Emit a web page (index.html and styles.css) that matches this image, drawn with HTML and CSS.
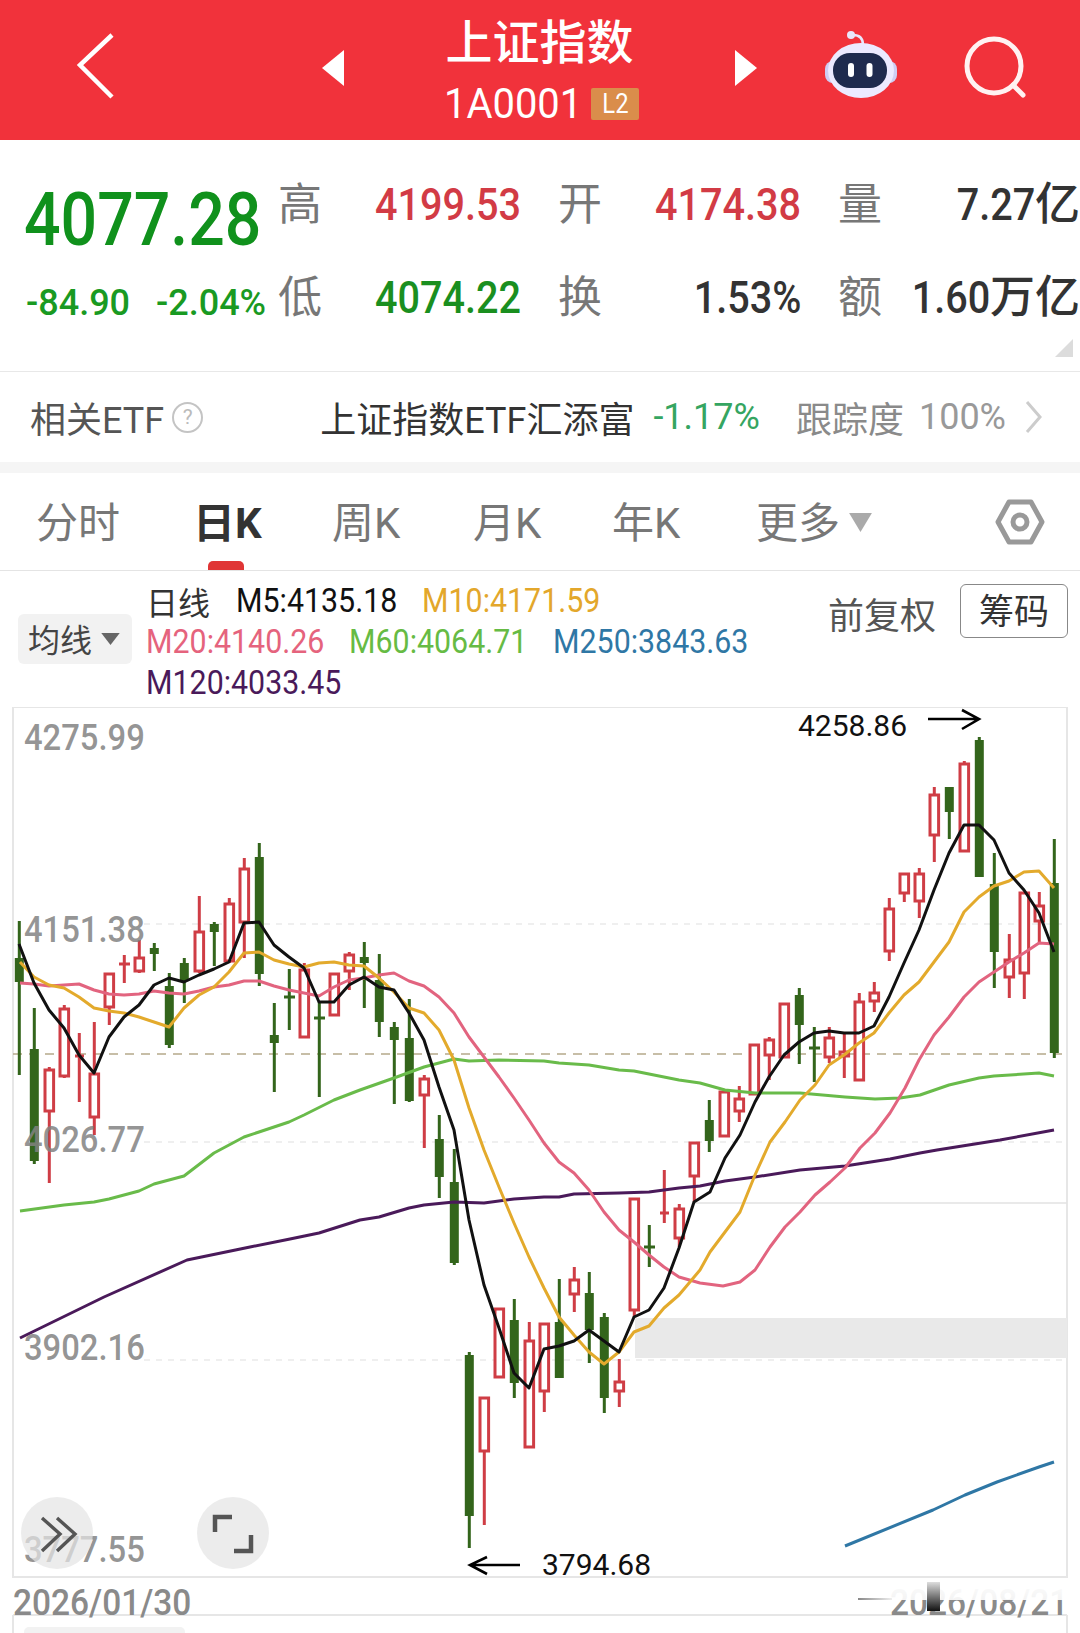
FILE: index.html
```html
<!DOCTYPE html>
<html lang="zh-CN">
<head>
<meta charset="utf-8">
<title>上证指数</title>
<link rel="stylesheet" href="styles.css">
</head>
<body>
<div class="page">
  <header class="hdr">
    <svg class="back" viewBox="0 0 44 70"><path d="M38 3 6 33 38 65" transform="translate(0 -1)"/></svg>
    <svg class="tri tri-l" viewBox="0 0 22 36"><path d="M22 0V36L0 18Z"/></svg>
    <div class="title-block">
      <div class="title">上证指数</div>
      <div class="sub"><span class="code"><span class="sq-l sq95">1A0001</span></span><span class="badge"><span class="sq-c sq85">L2</span></span></div>
    </div>
    <svg class="tri tri-r" viewBox="0 0 22 36"><path d="M0 0V36L22 18Z"/></svg>
    <svg class="robot" viewBox="0 0 82 70">
      <path class="ant" d="M33 4C38 4 43 6 43 14"/>
      <circle class="ant-dot" cx="31" cy="4" r="4"/>
      <rect class="ear" x="5" y="30" width="72" height="22" rx="8"/>
      <ellipse class="helm" cx="41" cy="39.500" rx="33" ry="27.500"/>
      <rect class="face" x="13" y="22" width="54" height="35" rx="17"/>
      <rect class="eye" x="28" y="32" width="6" height="14" rx="3"/>
      <rect class="eye" x="46.500" y="32" width="6" height="14" rx="3"/>
    </svg>
    <svg class="search" viewBox="0 0 70 70"><circle cx="34" cy="33" r="27"/><path d="M53 52 63 62"/></svg>
  </header>

  <section class="quote">
    <div class="price-cell"><span class="price sq-l sq87">4077.28</span></div>
    <div class="stat"><span class="lbl">高</span><span class="val red sq-r sq88">4199.53</span></div>
    <div class="stat"><span class="lbl">开</span><span class="val red sq-r sq88">4174.38</span></div>
    <div class="stat"><span class="lbl">量</span><span class="val dark"><span class="sq-r sq88">7.27</span>亿</span></div>
    <div class="chg-cell"><span class="chg chg-a">-84.90</span><span class="chg">-2.04%</span></div>
    <div class="stat"><span class="lbl">低</span><span class="val green sq-r sq88">4074.22</span></div>
    <div class="stat"><span class="lbl">换</span><span class="val dark sq-r sq88">1.53%</span></div>
    <div class="stat"><span class="lbl">额</span><span class="val dark"><span class="sq-r sq88">1.60</span>万亿</span></div>
    <span class="corner"></span>
  </section>

  <section class="etf">
    <span class="etf-lbl">相关ETF</span>
    <span class="help">?</span>
    <span class="etf-name">上证指数ETF汇添富</span>
    <span class="etf-pct">-1.17%</span>
    <span class="etf-track">跟踪度</span>
    <span class="etf-num">100%</span>
    <svg class="etf-arrow" viewBox="0 0 18 34"><path d="M2 2 15 17 2 32"/></svg>
  </section>

  <div class="band"></div>

  <nav class="tabs">
    <span class="tab">分时</span>
    <span class="tab tab-on">日K</span>
    <span class="tab">周K</span>
    <span class="tab">月K</span>
    <span class="tab">年K</span>
    <span class="tab">更多</span>
    <svg class="more-tri" viewBox="0 0 24 20"><path d="M0 0H24L12 20Z"/></svg>
    <svg class="hex" viewBox="0 0 50 46"><path d="M14 3H36L47 23 36 43H14L3 23Z"/><circle cx="25" cy="23" r="7"/></svg>
  </nav>

  <section class="ind">
    <div class="pill"><span class="pill-text">均线</span><svg class="pill-tri" viewBox="0 0 20 13"><path d="M0 0H20L10 13Z"/></svg></div>
    <div class="ma-col">
      <div class="ma-row"><span class="ma-head">日线</span><span class="ma w186 c-black"><span class="sq-l sq92">M5:4135.18</span></span><span class="ma c-orange"><span class="sq-l sq92">M10:4171.59</span></span></div>
      <div class="ma-row"><span class="ma w203 c-pink"><span class="sq-l sq92">M20:4140.26</span></span><span class="ma w204 c-green"><span class="sq-l sq92">M60:4064.71</span></span><span class="ma c-blue"><span class="sq-l sq92">M250:3843.63</span></span></div>
      <div class="ma-row"><span class="ma c-purple"><span class="sq-l sq92">M120:4033.45</span></span></div>
    </div>
    <div class="ind-right">
      <span class="fq">前复权</span>
      <span class="chip">筹码</span>
    </div>
  </section>

  <section class="chart">
    <svg class="plot" viewBox="0 707 1080 926">
      <g class="frame">
        <path d="M13 707H1067V1577H13ZM13 1615H1067M13 1615V1633M1067 1615V1633"/>
      </g>
      <path class="grid-d" d="M144 924H1067M144 1142H1067M144 1360H1067"/>
      <path class="grid-s" d="M695 1203H1067"/>
      <path class="grid-p" d="M13 1054H1067"/>
      <rect class="zone" x="635" y="1318" width="432" height="40"/>

      <path class="w-up" d="M49.3 1067V1183M64.3 1005V1078M79.3 1033V1102M75 1056H84M94.3 1022V1135M109.3 973V1025M124.3 955V983M119 964H130M139.3 940V973M199.3 896V973M229.3 898V963M244.3 858V958M304.3 963V1038M334.3 973V1016M349.3 952V990M424.3 1075V1148M484.3 1397V1525M499.3 1308V1378M529.3 1322V1448M544.3 1323V1412M574.3 1267V1312M619.3 1359V1407M634.3 1198V1317M664.3 1170V1223M660 1213H669M679.3 1204V1247M694.3 1142V1202M724.3 1091V1137M739.3 1086V1122M754.3 1044V1095M769.3 1037V1080M784.3 1003V1058M829.3 1027V1063M844.3 1033V1078M859.3 993V1081M874.3 982V1012M889.3 898V961M904.3 873V902M919.3 868V918M934.3 787V862M964.3 761V852M1009.3 934V998M1024.3 892V999M1039.3 892V942"/>
      <path class="w-dn" d="M19.3 921V1075M34.3 1008V1164M154.3 943V971M169.3 973V1048M184.3 958V1003M214.3 922V966M259.3 843V986M274.3 1003V1092M289.3 969V1030M284 997H295M319.3 1002V1097M314 1018H325M364.3 942V1008M379.3 954V1037M394.3 1022V1104M409.3 999V1102M439.3 1115V1198M454.3 1149V1265M469.3 1352V1548M514.3 1299V1398M559.3 1279V1378M589.3 1272V1363M604.3 1313V1413M649.3 1225V1267M644 1247H655M709.3 1100V1152M799.3 988V1064M814.3 1027V1082M809 1048H820M949.3 787V839M979.3 737V877M994.3 853V988M1054.3 839V1058"/>

      <g class="b-dn">
        <rect x="14.8" y="958" width="9" height="24"/>
        <rect x="29.8" y="1049" width="9" height="112"/>
        <rect x="149.8" y="948" width="9" height="6"/>
        <rect x="164.8" y="986" width="9" height="59"/>
        <rect x="179.8" y="963" width="9" height="17"/>
        <rect x="209.8" y="924" width="9" height="8"/>
        <rect x="254.8" y="857" width="9" height="117"/>
        <rect x="269.8" y="1035" width="9" height="8"/>
        <rect x="359.8" y="957" width="9" height="6"/>
        <rect x="374.8" y="980" width="9" height="42"/>
        <rect x="389.8" y="1027" width="9" height="13"/>
        <rect x="404.8" y="1038" width="9" height="63"/>
        <rect x="434.8" y="1139" width="9" height="38"/>
        <rect x="449.8" y="1182" width="9" height="81"/>
        <rect x="464.8" y="1355" width="9" height="161"/>
        <rect x="509.8" y="1320" width="9" height="63"/>
        <rect x="554.8" y="1322" width="9" height="56"/>
        <rect x="584.8" y="1293" width="9" height="37"/>
        <rect x="599.8" y="1317" width="9" height="81"/>
        <rect x="704.8" y="1120" width="9" height="21"/>
        <rect x="794.8" y="995" width="9" height="30"/>
        <rect x="944.8" y="787" width="9" height="25"/>
        <rect x="974.8" y="740" width="9" height="137"/>
        <rect x="989.8" y="884" width="9" height="68"/>
        <rect x="1049.8" y="883" width="9" height="170"/>
      </g>
      <g class="b-up">
        <rect x="45" y="1070" width="8.6" height="41"/>
        <rect x="60" y="1009" width="8.6" height="67"/>
        <rect x="90" y="1074" width="8.6" height="43"/>
        <rect x="105" y="974" width="8.6" height="33"/>
        <rect x="135" y="958" width="8.6" height="13"/>
        <rect x="195" y="932" width="8.6" height="39"/>
        <rect x="225" y="904" width="8.6" height="57"/>
        <rect x="240" y="869" width="8.6" height="53"/>
        <rect x="300" y="970" width="8.6" height="67"/>
        <rect x="330" y="974" width="8.6" height="41"/>
        <rect x="345" y="955" width="8.6" height="16"/>
        <rect x="420" y="1079" width="8.6" height="16"/>
        <rect x="480" y="1398" width="8.6" height="53"/>
        <rect x="495" y="1309" width="8.6" height="68"/>
        <rect x="525" y="1341" width="8.6" height="106"/>
        <rect x="540" y="1324" width="8.6" height="67"/>
        <rect x="570" y="1280" width="8.6" height="14"/>
        <rect x="615" y="1382" width="8.6" height="9"/>
        <rect x="630" y="1199" width="8.6" height="111"/>
        <rect x="675" y="1209" width="8.6" height="29"/>
        <rect x="690" y="1143" width="8.6" height="33"/>
        <rect x="720" y="1092" width="8.6" height="44"/>
        <rect x="735" y="1099" width="8.6" height="12"/>
        <rect x="750" y="1045" width="8.6" height="49"/>
        <rect x="765" y="1040" width="8.6" height="15"/>
        <rect x="780" y="1004" width="8.6" height="53"/>
        <rect x="825" y="1038" width="8.6" height="19"/>
        <rect x="840" y="1052" width="8.6" height="4"/>
        <rect x="855" y="1002" width="8.6" height="78"/>
        <rect x="870" y="993" width="8.6" height="8"/>
        <rect x="885" y="909" width="8.6" height="42"/>
        <rect x="900" y="874" width="8.6" height="19"/>
        <rect x="915" y="874" width="8.6" height="27"/>
        <rect x="930" y="795" width="8.6" height="40"/>
        <rect x="960" y="764" width="8.6" height="87"/>
        <rect x="1005" y="960" width="8.6" height="17"/>
        <rect x="1020" y="893" width="8.6" height="80"/>
        <rect x="1035" y="906" width="8.6" height="15"/>
      </g>

      <polyline class="l l-blue" points="845,1546 933,1510 965,1495 997,1482 1039,1467 1054,1462"/>
      <polyline class="l l-purple" points="20,1338 104,1297 187,1260 250,1247 290,1239 319,1233 360,1220 379,1217 409,1208 424,1205 454,1202 484,1203 514,1199 544,1197 559,1197 574,1194 619,1193 649,1192 679,1188 700,1186 725,1181 755,1177 800,1170 845,1166 890,1159 920,1153 937,1150 1000,1140 1054,1130"/>
      <polyline class="l l-green" points="20,1211 64,1205 94,1202 109,1199 139,1191 154,1184 184,1176 214,1153 244,1137 259,1132 289,1122 304,1115 334,1100 360,1090 394,1078 424,1067 454,1059 469,1061 499,1060 544,1061 559,1063 589,1065 619,1070 634,1071 679,1080 700,1083 725,1090 755,1093 800,1093 845,1097 875,1099 900,1098 920,1095 949,1085 979,1078 994,1076 1039,1073 1054,1076"/>
      <polyline class="l l-pink" points="20,983 34,984 49,986 64,985 79,984 94,990 109,994 124,995 139,994 154,991 169,993 184,994 199,991 214,987 229,985 244,981 259,981 274,986 289,990 304,993 319,996 334,987 349,980 364,978 379,975 394,973 409,981 424,986 439,997 454,1013 469,1037 484,1057 499,1077 514,1098 529,1120 544,1143 559,1162 574,1173 589,1190 604,1212 619,1230 634,1242 649,1255 664,1267 679,1277 700,1283 723,1286 740,1282 755,1270 770,1247 785,1227 800,1212 815,1195 830,1182 845,1168 860,1148 875,1133 890,1113 905,1088 919,1060 934,1035 949,1017 964,997 979,982 994,972 1009,962 1024,953 1039,943 1054,944"/>
      <polyline class="l l-orange" points="20,962 34,977 49,985 64,988 79,997 94,1008 109,1011 124,1013 139,1017 154,1022 169,1027 184,1008 199,995 214,987 229,972 244,953 259,952 274,960 289,964 304,967 319,963 334,962 349,965 364,966 379,978 394,992 409,1008 424,1013 439,1030 454,1060 469,1108 484,1150 499,1187 514,1223 529,1257 544,1288 559,1317 574,1335 589,1352 604,1364 619,1352 634,1332 649,1326 664,1308 679,1295 700,1270 710,1252 725,1232 740,1212 755,1175 770,1142 785,1122 800,1100 815,1085 829,1065 844,1055 859,1043 874,1033 889,1013 904,995 919,982 934,962 949,942 964,912 979,897 994,886 1009,881 1024,872 1039,871 1054,888"/>
      <polyline class="l l-black" points="19,944 34,983 49,1010 64,1028 79,1055 94,1073 109,1037 124,1017 139,1005 154,985 169,978 184,982 199,975 214,969 229,962 244,923 259,922 274,945 289,957 304,968 319,1002 334,1002 349,985 364,977 379,987 394,990 409,1013 424,1040 439,1087 454,1130 469,1220 484,1285 499,1328 514,1373 529,1388 544,1349 559,1346 574,1341 589,1330 604,1341 619,1352 634,1317 649,1310 664,1288 679,1248 694,1202 710,1192 725,1158 740,1135 755,1102 769,1077 784,1055 799,1042 814,1033 829,1031 844,1033 859,1033 874,1026 889,997 904,963 919,930 934,890 949,853 964,825 979,825 994,840 1009,873 1024,890 1039,913 1054,952"/>

      <path class="arrow" d="M928 719H979M962 710 979 719 962 729"/>
      <path class="arrow" d="M520 1565H470M487 1557 470 1565 487 1574"/>
    </svg>

    <span class="ax ax1">4275.99</span>
    <span class="ax ax2">4151.38</span>
    <span class="ax ax3">4026.77</span>
    <span class="ax ax4">3902.16</span>
    <span class="ax ax5">3777.55</span>
    <span class="peak peak-hi">4258.86</span>
    <span class="peak peak-lo">3794.68</span>
    <span class="date date-l">2026/01/30</span>
    <span class="date date-r">2026/08/21</span>
    <span class="date-fade"></span>
    <span class="date-bar"></span>
    <span class="date-dash"></span>

    <div class="fab fab-a"><svg viewBox="0 0 72 72"><path d="M21 21 39 37 21 54M36 21 54 37 36 54"/></svg></div>
    <div class="fab fab-b"><svg viewBox="0 0 72 72"><path d="M18 35V20H35M37 54H54V38"/></svg></div>
    <span class="bottom-pill"></span>
  </section>
</div>
</body>
</html>
```
FILE: styles.css
```css
* { box-sizing: border-box; }
html, body { margin: 0; padding: 0; background: #fff; }
body { font-family: Roboto, "Noto Sans CJK SC", sans-serif; color: #333; }
.page { width: 1080px; height: 1633px; overflow: hidden; position: relative; background: #fff; }

/* horizontal squeeze of the narrow phone numerals */
.sq-l, .sq-r, .sq-c { display: inline-block; white-space: nowrap; }
.sq-l { transform-origin: left center; }
.sq-r { transform-origin: right center; }
.sq-c { transform-origin: center center; }
.sq85 { transform: scaleX(.85); }
.sq87 { transform: scaleX(.87); }
.sq88 { transform: scaleX(.88); }
.sq92 { transform: scaleX(.92); }
.sq95 { transform: scaleX(.95); }

/* header */
.hdr { height: 140px; background: #f1323b; display: flex; align-items: center; padding-bottom: 4px; }
.back { width: 44px; height: 70px; margin-left: 74px; fill: none; stroke: #fff; stroke-width: 4.5; }
.tri { width: 22px; height: 36px; fill: #fff; }
.tri-l { margin-left: 204px; }
.tri-r { margin-left: 93px; }
.title-block { width: 204px; margin-left: 94px; align-self: flex-start; padding-top: 18px; color: #fff; text-align: center; }
.title { font-size: 47px; line-height: 50px; font-weight: 500; white-space: nowrap; margin-left: -1px; }
.sub { display: flex; align-items: center; height: 36px; margin-top: 18px; padding-left: 6px; }
.code { width: 133px; font-size: 42px; line-height: 36px; text-align: left; color: #fff; white-space: nowrap; }
.badge { width: 48px; height: 32px; margin-left: 14px; background: #da8d4b; color: #fff; font-size: 28px; line-height: 32px; text-align: center; border-radius: 2px; }
.robot { width: 82px; height: 70px; margin-left: 63px; margin-top: -4px; }
.ant { fill: none; stroke: #e9e7fb; stroke-width: 2.5; }
.ant-dot { fill: #e9e7fb; }
.ear { fill: #cfcdf3; }
.helm { fill: #eceaff; }
.face { fill: #1f2b4e; }
.eye { fill: #fff; }
.search { width: 70px; height: 70px; margin-left: 58px; fill: none; stroke: #fff2f2; stroke-width: 5; stroke-linecap: round; }

/* quote */
.quote { position: relative; height: 232px; padding-top: 18px; border-bottom: 1px solid #e8e8e8; display: grid; grid-template-columns: 241px 240px 240px 239px; grid-auto-rows: 93px; column-gap: 40px; }
.price-cell { padding: 30px 0 0 24px; height: 93px; display: flex; align-items: center; }
.price { font-size: 74px; line-height: 74px; font-weight: 500; color: #10911c; }
.chg-cell { display: flex; align-items: center; padding: 10px 0 0 26px; }
.chg { flex: none; font-size: 36px; font-weight: 500; color: #199a22; white-space: nowrap; }
.chg-a { width: 130px; }
.stat { display: flex; justify-content: space-between; align-items: center; }
.lbl { font-size: 44px; line-height: 50px; color: #777; margin-left: -3px; }
.val { font-size: 45px; line-height: 50px; font-weight: 500; white-space: nowrap; }
.dark { color: #333; }
.red { color: #d23b45; }
.green { color: #1a8f1f; }
.corner { position: absolute; right: 7px; bottom: 14px; width: 18px; height: 18px; background: #dcdcdc; clip-path: polygon(100% 0, 100% 100%, 0 100%); }

/* ETF row */
.etf { height: 90px; display: flex; align-items: center; padding-left: 30px; font-size: 36px; white-space: nowrap; }
.etf-lbl { color: #555; }
.help { width: 31px; height: 31px; margin-left: 8px; border: 2px solid #c4c4c4; border-radius: 50%; color: #bbb; font-size: 21px; line-height: 27px; text-align: center; }
.etf-name { margin-left: auto; color: #333; }
.etf-pct { margin-left: 19px; color: #35a561; }
.etf-track { margin-left: 36px; color: #8a8a8a; }
.etf-num { margin-left: 15px; color: #999; }
.etf-arrow { width: 18px; height: 34px; margin: 0 37px 0 19px; fill: none; stroke: #ccc; stroke-width: 3; }
.band { height: 11px; background: #f5f5f5; }

/* tabs */
.tabs { position: relative; height: 98px; padding-top: 5px; border-bottom: 1px solid #e4e4e4; display: grid; grid-template-columns: 157px 139px 141px 139px 144px 93px 23px 1fr; align-items: center; padding-left: 36px; }
.tab { font-size: 42px; line-height: 50px; color: #777; white-space: nowrap; }
.tab-on { color: #333; font-weight: 700; position: relative; }
.tab-on::after { content: ""; position: absolute; left: 15px; bottom: -21px; width: 36px; height: 9px; background: #e03535; border-radius: 5px 5px 0 0; }
.more-tri { width: 23px; height: 19px; margin-top: -4px; fill: #aaa; }
.hex { width: 50px; height: 46px; justify-self: end; margin-top: -4px; margin-right: 35px; fill: none; stroke: #999; stroke-width: 5; stroke-linejoin: round; }

/* indicators */
.ind { height: 136px; display: flex; align-items: flex-start; padding-left: 18px; }
.pill { width: 114px; height: 50px; margin-top: 43px; background: #f2f2f2; border-radius: 6px; display: flex; align-items: center; padding-left: 10px; font-size: 32px; color: #444; }
.pill-text { margin-top: -3px; }
.pill-tri { width: 19px; height: 12px; margin-left: 9px; fill: #666; }
.ma-col { width: 640px; margin-left: 14px; padding-top: 9px; }
.ma-row { display: flex; align-items: center; height: 41px; font-size: 33px; white-space: nowrap; }
.ma-head { width: 90px; font-size: 32px; color: #333; }
.ma { display: block; }
.w186 { width: 186px; }
.w203 { width: 203px; }
.w204 { width: 204px; }
.c-black { color: #111; }
.c-orange { color: #e3a72b; }
.c-pink { color: #e5637d; }
.c-green { color: #66bb44; }
.c-blue { color: #2f77a5; }
.c-purple { color: #4a1a5a; }
.ind-right { display: flex; align-items: flex-start; margin-left: 42px; padding-top: 13px; }
.fq { font-size: 36px; line-height: 50px; color: #555; margin-top: 8px; white-space: nowrap; }
.chip { width: 108px; height: 54px; margin-left: 24px; border: 1px solid #888; border-radius: 6px; font-size: 35px; line-height: 56px; text-align: center; color: #333; }

/* chart */
.chart { position: relative; height: 926px; }
.plot { display: block; width: 1080px; height: 926px; }
.frame path { fill: none; stroke: #e6e6e6; stroke-width: 2; }
.grid-d { fill: none; stroke: #dfdfdf; stroke-width: 1; stroke-dasharray: 6 6; }
.grid-s { fill: none; stroke: #e2e2e2; stroke-width: 1.5; }
.grid-p { fill: none; stroke: #b5a98a; stroke-width: 1.5; stroke-dasharray: 9 7; }
.zone { fill: #e9e9e9; }
.w-up { fill: none; stroke: #cf3d45; stroke-width: 3; }
.w-dn { fill: none; stroke: #33651b; stroke-width: 3; }
.b-dn rect { fill: #33651b; }
.b-up rect { fill: #fff; stroke: #cf3d45; stroke-width: 3; }
.l { fill: none; stroke-width: 3; stroke-linejoin: round; }
.l-black { stroke: #111; }
.l-orange { stroke: #e3aa2c; }
.l-pink { stroke: #e2647f; }
.l-green { stroke: #69bb4a; }
.l-blue { stroke: #2f77a5; }
.l-purple { stroke: #4a1a5a; }
.arrow { fill: none; stroke: #000; stroke-width: 2.6; }

.ax { position: absolute; left: 24px; font-size: 36px; line-height: 36px; font-weight: 500; color: rgba(130, 130, 130, .85); transform: scaleX(.91); transform-origin: left center; white-space: nowrap; }
.ax1 { top: 13px; }
.ax2 { top: 205px; }
.ax3 { top: 415px; }
.ax4 { top: 623px; }
.ax5 { top: 825px; }
.peak { position: absolute; font-size: 30px; line-height: 30px; color: #111; white-space: nowrap; }
.peak-hi { left: 798px; top: 4px; }
.peak-lo { left: 542px; top: 843px; }
.date { position: absolute; top: 878px; font-size: 36px; line-height: 36px; font-weight: 500; color: #8a8a8a; white-space: nowrap; transform: scaleX(.93); transform-origin: left center; }
.date-l { left: 13px; }
.date-r { left: 890px; }
.date-fade { position: absolute; left: 855px; top: 871px; width: 212px; height: 22px; background: linear-gradient(#fff, rgba(255, 255, 255, .9)); }
.date-bar { position: absolute; left: 927px; top: 875px; width: 13px; height: 29px; background: linear-gradient(#ddd, #111); }
.date-dash { position: absolute; left: 858px; top: 891px; width: 34px; height: 2px; background: linear-gradient(90deg, #888, #eee); }
.fab { position: absolute; width: 72px; height: 72px; top: 790px; border-radius: 50%; background: rgba(228, 228, 228, .72); }
.fab svg { display: block; width: 72px; height: 72px; fill: none; stroke: #555; stroke-width: 3.4; }
.fab-a { left: 21px; }
.fab-b { left: 197px; }
.fab-b svg { stroke-width: 4.5; }
.bottom-pill { position: absolute; left: 24px; top: 920px; width: 161px; height: 10px; border-radius: 5px 5px 0 0; background: #f2f2f2; }
```
